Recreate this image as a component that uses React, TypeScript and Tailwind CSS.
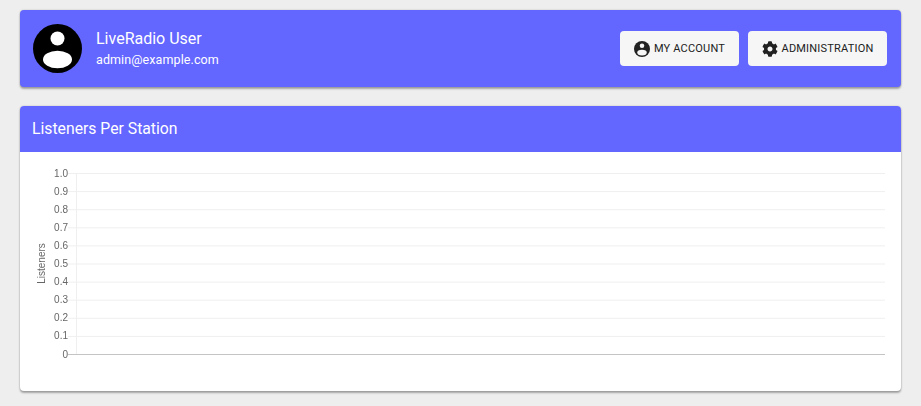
import { FaCog } from "react-icons/fa";

const ticks = ["1.0", "0.9", "0.8", "0.7", "0.6", "0.5", "0.4", "0.3", "0.2", "0.1", "0"];

function UserAvatar({ size, fill, mark }: { size: number; fill: string; mark: string }) {
  return (
    <svg width={size} height={size} viewBox="0 0 49 49">
      <circle cx="24.5" cy="24.5" r="24.5" fill={fill} />
      <circle cx="24.5" cy="14.5" r="7" fill={mark} />
      <ellipse cx="24.5" cy="35.5" rx="14.5" ry="8.8" fill={mark} />
    </svg>
  );
}

function HeaderButton({ icon, label, width }: { icon: React.ReactNode; label: string; width: string }) {
  return (
    <button className={`flex h-[35px] ${width} items-center justify-center gap-[4px] rounded bg-[#f6f6f6] text-[11px] font-normal leading-none tracking-[0.2px] text-[#212121]`}>
      {icon}
      {label}
    </button>
  );
}

function ListenersChart() {
  return (
    <svg width="880" height="239" className="block will-change-transform" style={{ fontFamily: "'Liberation Sans', Arial, sans-serif" }}>
      {ticks.map((tick, i) => {
        const y = 21.5 + i * 18.1;
        const last = i === ticks.length - 1;
        return (
          <g key={tick}>
            <line x1="48" x2="865" y1={y} y2={y} stroke={last ? "#c4c4c4" : "#efefef"} />
            <text x="48" y={y + 3} textAnchor="end" fontSize="10" fill="#666666">
              {tick}
            </text>
          </g>
        );
      })}
      <line x1="56.5" x2="56.5" y1="21" y2="202" stroke="#efefef" />
      <text transform="translate(24.5 111.5) rotate(-90)" textAnchor="middle" fontSize="10" fill="#666666">
        Listeners
      </text>
    </svg>
  );
}

export default function App() {
  return (
    <div className="flex min-h-[406px] flex-col gap-[19px] bg-[#eeeeee] px-5 pb-[15px] pt-2.5 font-['Roboto',sans-serif] text-white">
      <div className="flex h-[77px] items-center justify-between rounded bg-[#6366ff] pl-[13px] pr-[14px] shadow-[0_2px_2px_rgba(0,0,0,0.3),0_0_2px_rgba(0,0,0,0.2)]">
        <div className="flex items-center gap-[14px]">
          <UserAvatar size={49} fill="#000000" mark="#ffffff" />
          <div>
            <div className="text-[16px] leading-[20px]">LiveRadio User</div>
            <div className="mt-[2px] text-[12.5px] leading-[18px] tracking-[0.1px]">admin@example.com</div>
          </div>
        </div>
        <div className="flex gap-[9px]">
          <HeaderButton icon={<UserAvatar size={16} fill="#212121" mark="#f6f6f6" />} label="MY ACCOUNT" width="w-[119px]" />
          <HeaderButton icon={<FaCog size={16} />} label="ADMINISTRATION" width="w-[139px]" />
        </div>
      </div>
      <div className="flex h-[285px] flex-col overflow-hidden rounded bg-white shadow-[0_2px_2px_rgba(0,0,0,0.3),0_0_2px_rgba(0,0,0,0.2)]">
        <div className="flex h-[46px] items-center bg-[#6366ff] px-3 text-[15.75px]">Listeners Per Station</div>
        <ListenersChart />
      </div>
    </div>
  );
}
